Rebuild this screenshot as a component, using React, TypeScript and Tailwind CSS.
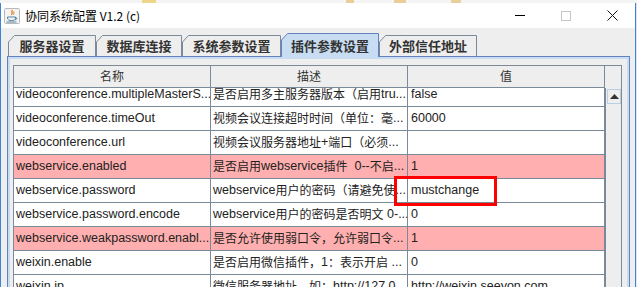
import React from 'react'

const CJK = /([\u3000-\u303f\u4e00-\u9fff\uff00-\uffef]+)/

// CJK glyphs render a bit smaller than the latin text in the Swing table
const Txt = ({ s }: { s: string }) => (
  <>
    {s.split(CJK).map((part, i) =>
      CJK.test(part) ? (
        <span key={i} className="text-[12px]">
          {part}
        </span>
      ) : (
        part
      )
    )}
  </>
)

type Row = { name: string; desc: string; value: string; pink?: boolean }

const rows: Row[] = [
  { name: 'videoconference.multipleMasterS...', desc: '是否启用多主服务器版本（启用tru...', value: 'false' },
  { name: 'videoconference.timeOut', desc: '视频会议连接超时时间（单位：毫...', value: '60000' },
  { name: 'videoconference.url', desc: '视频会议服务器地址+端口（必须...', value: '' },
  { name: 'webservice.enabled', desc: '是否启用webservice插件  0--不启...', value: '1', pink: true },
  { name: 'webservice.password', desc: 'webservice用户的密码（请避免使...', value: 'mustchange' },
  { name: 'webservice.password.encode', desc: 'webservice用户的密码是否明文 0-...', value: '0' },
  { name: 'webservice.weakpassword.enabl...', desc: '是否允许使用弱口令，允许弱口令...', value: '1', pink: true },
  { name: 'weixin.enable', desc: '是否启用微信插件，1：表示开启 ...', value: '0' },
  { name: 'weixin.ip', desc: '微信服务器地址，如：http://127.0...', value: 'http://weixin.seeyon.com' },
]

const tabs = [
  { label: '服务器设置', w: 88 },
  { label: '数据库连接', w: 86 },
  { label: '系统参数设置', w: 99 },
  { label: '插件参数设置', w: 98, active: true },
  { label: '外部信任地址', w: 98 },
]

const Tab = ({ label, w, active }: { label: string; w: number; active?: boolean }) => {
  const h = active ? 24 : 21
  return (
    <div
      className={
        active
          ? 'relative z-10 -mb-px flex h-[24px] items-center justify-center pt-[1px] text-[13px] font-bold text-[#333333]'
          : 'relative flex h-[21px] items-center justify-center pt-[1px] text-[13px] font-bold text-[#333333]'
      }
      style={{ width: w }}
    >
      <svg className="absolute inset-0" width={w} height={h}>
        <path
          d={`M0.5 ${h} V7 L6.5 0.5 H${w - 0.5} V${h}`}
          fill={active ? '#c8ddf2' : '#eeeeee'}
          stroke={active ? '#6382bf' : '#7a8a99'}
        />
      </svg>
      <span className="relative">{label}</span>
    </div>
  )
}

const JavaIcon = () => (
  <svg width="16" height="16" viewBox="0 0 16 16">
    <rect x="0.5" y="0.5" width="15" height="15" rx="1" fill="#f4f4f4" stroke="#b8b8b8" />
    <path d="M8.5 2 C6.5 3.5 9.5 4.5 7.5 7" stroke="#e76f00" strokeWidth="1.2" fill="none" />
    <path d="M10 3.5 C9 4.5 10.5 5 9.5 6.5" stroke="#e76f00" strokeWidth="1" fill="none" />
    <path d="M3.5 9 H11.5 V10 C11.5 11.8 9.8 12.5 7.5 12.5 C5.2 12.5 3.5 11.8 3.5 10 Z" fill="none" stroke="#5382a1" />
    <path d="M11.5 9.5 C13.5 9.5 13.5 11.5 11 11.8" fill="none" stroke="#5382a1" />
    <path d="M2.5 14 H12.5" stroke="#5382a1" />
  </svg>
)

export default function App() {
  return (
    <div className="flex h-[287px] w-[637px] flex-col overflow-hidden bg-[#f1f0ec] font-['Liberation_Sans','Noto_Sans_CJK_SC',sans-serif]">
      {/* strip of the window behind */}
      <div className="flex h-[3px] shrink-0 bg-[#f4f4f4]">
        <div className="ml-[142px] h-full w-[14px] bg-[#efd58a]" />
        <div className="ml-[190px] h-full w-[8px] bg-[#e8cf9a]" />
        <div className="ml-[40px] h-full w-[12px] bg-[#e8cf9a]" />
        <div className="ml-[45px] h-full w-[10px] bg-[#e8cf9a]" />
      </div>
      <div className="flex min-h-0 flex-1">
        <div className="flex w-[636px] flex-col border-x border-[#3c84d8]">
          {/* title bar */}
          <div className="flex h-[25px] shrink-0 items-center bg-white">
            <div className="ml-[3px]">
              <JavaIcon />
            </div>
            <span className="ml-[5px] font-['Noto_Sans_CJK_SC',sans-serif] text-[12px] text-black">
              协同系统配置 V1.2 (c)
            </span>
            <div className="ml-auto flex h-full">
              <div className="flex w-[46px] items-center justify-center">
                <div className="h-px w-[10px] bg-black" />
              </div>
              <div className="flex w-[46px] items-center justify-center">
                <div className="size-[10px] border border-[#c4c4c4]" />
              </div>
              <div className="flex w-[46px] items-center justify-center">
                <svg width="11" height="11" viewBox="0 0 11 11">
                  <path d="M0.5 0.5 L10.5 10.5 M10.5 0.5 L0.5 10.5" stroke="#111" strokeWidth="1" />
                </svg>
              </div>
            </div>
          </div>

          {/* body */}
          <div className="flex min-h-0 flex-1 flex-col bg-[#eeeeee] pt-[5px]">
            <div className="flex h-[23px] shrink-0 items-end pl-[7px] font-['Noto_Sans_CJK_SC',sans-serif]">
              {tabs.map((t) => (
                <Tab key={t.label} {...t} />
              ))}
            </div>

            <div className="ml-[6px] flex min-h-0 w-[623px] flex-1 flex-col border border-b-0 border-[#6382bf]">
              <div className="flex min-h-0 flex-1 flex-col border-2 border-b-0 border-[#c8ddf2] bg-[#eeeeee] pl-[3px] pt-[6px]">
                <div className="flex min-h-0 w-[609px] flex-1 border border-b-0 border-[#7a8a99] text-[12.5px] text-[#222222]">
                  <div className="flex w-[591px] flex-col">
                    <div className="flex h-[22px] shrink-0 border-b border-[#7a8a99] bg-[#eeeeee] text-[#333333]">
                      {['名称', '描述', '值'].map((h) => (
                        <div key={h} className="flex w-[197px] items-center justify-center border-r border-[#7a8a99]">
                          <Txt s={h} />
                        </div>
                      ))}
                    </div>
                    <div className="min-h-0 flex-1 overflow-hidden bg-white">
                      <div className="relative -mt-[5px]">
                        {rows.map((r) => (
                          <div
                            key={r.name}
                            className={
                              r.pink
                                ? 'flex h-[24px] border-b border-[#7a8a99] bg-[#ffafaf]'
                                : 'flex h-[24px] border-b border-[#7a8a99] bg-white'
                            }
                          >
                            <div className="flex w-[197px] items-center overflow-hidden whitespace-pre border-r border-[#7a8a99] pl-[2px]">
                              {r.name}
                            </div>
                            <div className="flex w-[197px] items-center overflow-hidden whitespace-pre border-r border-[#7a8a99] pl-[2px]">
                              <Txt s={r.desc} />
                            </div>
                            <div className="flex w-[197px] items-center overflow-hidden whitespace-pre border-r border-[#7a8a99] pl-[3px]">
                              {r.value}
                            </div>
                          </div>
                        ))}
                        {/* red highlight box */}
                        <div className="absolute left-[380px] top-[93px] h-[30px] w-[103px] border-[3px] border-[#ff0000]" />
                      </div>
                    </div>
                  </div>

                  {/* vertical scrollbar */}
                  <div className="flex w-[16px] flex-col">
                    <div className="h-[22px] shrink-0 bg-[#eeeeee]" />
                    <div className="flex flex-1 flex-col border-l border-[#7a8a99] bg-[#eeeeee]">
                      <div className="ml-[1px] mt-[1px] flex h-[15px] w-[14px] items-center justify-center border border-[#b8cfe5] bg-[#eeeeee]">
                        <svg width="9" height="5" viewBox="0 0 9 5">
                          <path d="M0 5 L4.5 0 L9 5 Z" fill="#333" />
                        </svg>
                      </div>
                    </div>
                  </div>
                </div>
              </div>
            </div>
          </div>
        </div>
        <div className="w-px bg-[#dfe6ef]" />
      </div>
    </div>
  )
}
